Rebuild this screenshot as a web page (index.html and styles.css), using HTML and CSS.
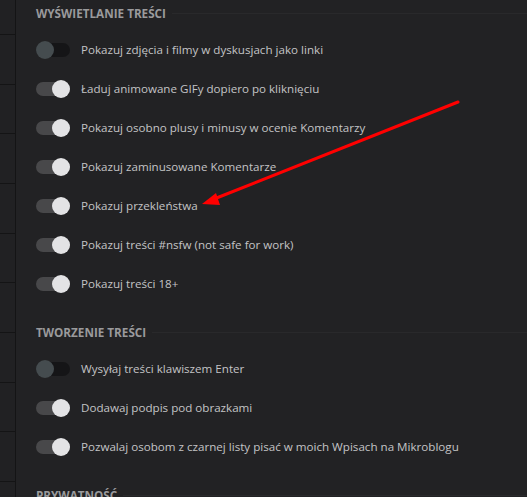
FILE: index.html
```html
<!DOCTYPE html>
<html lang="pl">
<head>
<meta charset="utf-8">
<link rel="stylesheet" href="styles.css">
</head>
<body>
<div class="page">
  <aside class="sidebar">
    <div class="side-item first"></div>
    <div class="side-item"></div>
    <div class="side-item"></div>
    <div class="side-item"></div>
    <div class="side-item"></div>
    <div class="side-item"></div>
    <div class="side-item"></div>
    <div class="side-item"></div>
    <div class="side-item"></div>
    <div class="side-item"></div>
  </aside>
  <main class="content">
    <section class="section">
      <h2 class="heading">Wyświetlanie treści</h2>
      <div class="row"><span class="toggle off"></span><span class="label">Pokazuj zdjęcia i filmy w dyskusjach jako linki</span></div>
      <div class="row"><span class="toggle on"></span><span class="label">Ładuj animowane GIFy dopiero po kliknięciu</span></div>
      <div class="row"><span class="toggle on"></span><span class="label">Pokazuj osobno plusy i minusy w ocenie Komentarzy</span></div>
      <div class="row"><span class="toggle on"></span><span class="label">Pokazuj zaminusowane Komentarze</span></div>
      <div class="row"><span class="toggle on"></span><span class="label">Pokazuj przekleństwa</span></div>
      <div class="row"><span class="toggle on"></span><span class="label">Pokazuj treści #nsfw (not safe for work)</span></div>
      <div class="row"><span class="toggle on"></span><span class="label">Pokazuj treści 18+</span></div>
    </section>
    <section class="section">
      <h2 class="heading">Tworzenie treści</h2>
      <div class="row"><span class="toggle off"></span><span class="label">Wysyłaj treści klawiszem Enter</span></div>
      <div class="row"><span class="toggle on"></span><span class="label">Dodawaj podpis pod obrazkami</span></div>
      <div class="row"><span class="toggle on"></span><span class="label">Pozwalaj osobom z czarnej listy pisać w moich Wpisach na Mikroblogu</span></div>
    </section>
    <section class="section">
      <h2 class="heading">Prywatność</h2>
    </section>
  </main>
  <svg class="arrow" width="527" height="497" viewBox="0 0 527 497">
    <line x1="458" y1="102" x2="214" y2="199" stroke="#f00" stroke-width="3" stroke-linecap="round"/>
    <polygon points="202,204 216,193 220,205" fill="#f00"/>
  </svg>
</div>
</body>
</html>
```
FILE: styles.css
```css
* { box-sizing: border-box; }
html, body { margin: 0; padding: 0; }
body {
  background: #222224;
  font-family: "Open Sans", "Noto Sans", sans-serif;
  width: 527px;
  height: 497px;
  overflow: hidden;
}
.page {
  position: relative;
  display: flex;
  height: 497px;
}
.sidebar {
  width: 16px;
  flex: none;
  border-right: 1px solid #141415;
  background: #212123;
}
.side-item {
  height: 49.67px;
  border-bottom: 1px solid #141415;
}
.side-item.first { height: 35px; }
.content {
  flex: 1;
  padding: 5px 0 0 20px;
}
.section { margin-bottom: 21px; }
.heading {
  display: flex;
  align-items: center;
  margin: 0 0 9px 0;
  height: 16px;
  font-size: 11.7px;
  font-weight: 700;
  text-transform: uppercase;
  color: #9a9a9c;
  letter-spacing: 0;
}
.heading::after {
  content: "";
  flex: 1;
  height: 1px;
  margin-left: 6px;
  background: #29292b;
}
.row {
  display: flex;
  align-items: center;
  height: 39px;
}
.toggle {
  position: relative;
  width: 34px;
  height: 14px;
  border-radius: 7px;
  flex: none;
  margin-right: 11px;
}
.toggle::after {
  content: "";
  position: absolute;
  top: -2px;
  width: 18px;
  height: 18px;
  border-radius: 50%;
}
.toggle.on { background: #48484a; }
.toggle.on::after { right: 0; background: #e3e3e5; }
.toggle.off { background: #151517; }
.toggle.off::after { left: 0; background: #454c4f; }
.label {
  font-size: 11.62px;
  color: #c4c4c6;
  white-space: nowrap;
}
.arrow {
  position: absolute;
  left: 0;
  top: 0;
  pointer-events: none;
}
```
